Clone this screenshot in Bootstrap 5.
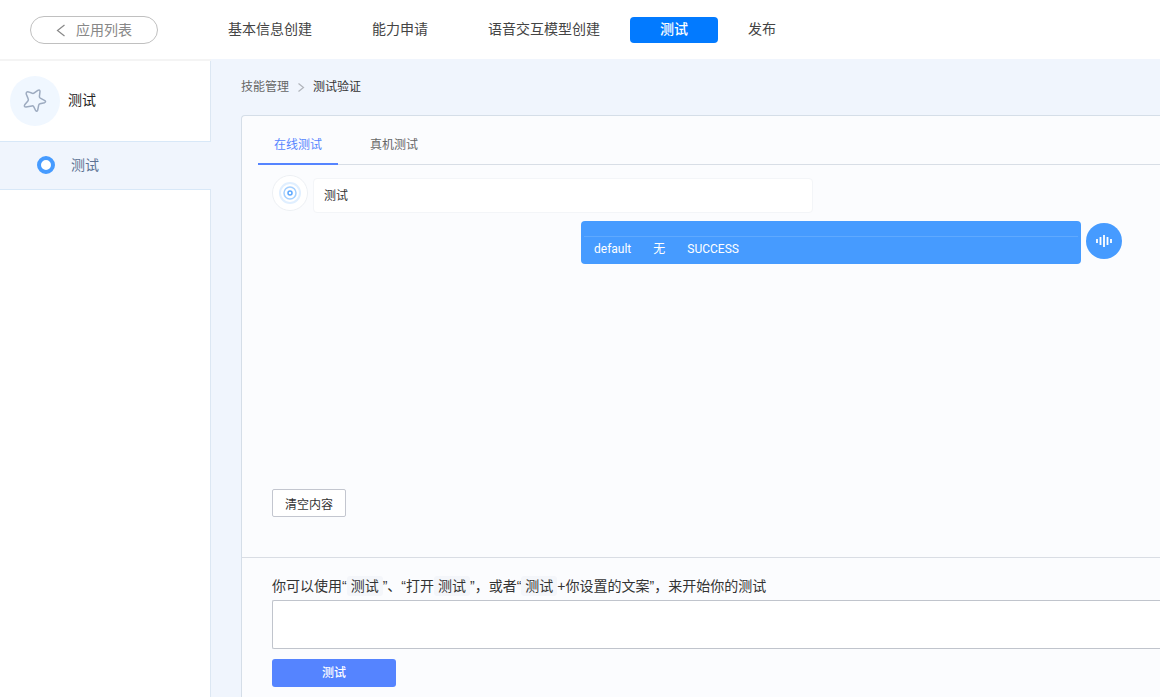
<!DOCTYPE html>
<html lang="zh-CN">
<head>
<meta charset="utf-8">
<meta name="viewport" content="width=device-width, initial-scale=1">
<title>测试验证</title>
<link href="https://cdn.jsdelivr.net/npm/bootstrap@5.3.0/dist/css/bootstrap.min.css" rel="stylesheet">
<style>
  body { font-family: "Liberation Sans", "Noto Sans CJK SC", sans-serif; font-size: 14px; line-height: 20px; color: #333; background: #f0f5fd; }
  a { text-decoration: none; }
  .fs-12 { font-size: 12px; }
  .topbar { height: 59px; padding-left: 30px; background: #fff; }
  .back-btn { width: 128px; height: 28px; border: 1px solid #c0c0c0; border-radius: 14px; color: #888; margin-right: 40px; padding-top: 1px; }
  .back-btn svg { margin-right: 10px; }
  .step-link { padding: 2px 30px 4px; color: #444; border-radius: 4px; }
  .step-link.active { background: #027aff; color: #fff; font-weight: 500; }
  .sidebar { width: 211px; background: #fff; border-top: 2px solid #f4f4f4; }
  .app-head { height: 80px; padding: 0 10px; border-right: 1px solid #dce7f3; color: #222; }
  .app-name { padding-bottom: 2px; }
  .app-icon { width: 50px; height: 50px; background: #f0f7ff; margin-right: 8px; }
  .side-link { height: 49px; padding: 0 0 1px 37px; background: #f0f5fd; border-top: 1px solid #d8e8f8; border-bottom: 1px solid #d8e8f8; color: #5b7293; }
  .ring { width: 18px; height: 18px; border: 4px solid #469bff; background: #fff; margin-right: 16px; }
  .side-rest { border-right: 1px solid #dce7f3; }
  .content-area { padding: 18px 0 0 30px; }
  .crumbs a { color: #666; }
  .panel { margin-top: 18px; background: #fbfcfe; border: 1px solid #d5dee8; border-width: 1px 0 0 1px; border-radius: 4px 0 0 0; }
  .test-tabs { margin-left: 16px; height: 49px; border-bottom: 1px solid #d8dee6; padding-top: 9px; }
  .tab-btn { background: none; border: 0; border-bottom: 2px solid transparent; height: 40px; padding: 2px 16px 0; margin-right: 16px; color: #666; }
  .tab-btn.active { color: #5584ff; border-color: #5584ff; }
  .chat { min-height: 392px; padding: 10px 38px 40px 30px; }
  .avatar { width: 36px; height: 36px; }
  .said { width: 500px; height: 35px; padding: 0 10px; margin: 3px 0 0 5px; background: #fff; border: 1px solid #f3f5f8; border-radius: 4px; }
  .reply { width: 500px; height: 43px; padding: 15px 3px 0; margin-right: 5px; background: #469bff; border-radius: 4px; color: #fff; font-family: Roboto, "Noto Sans CJK SC", sans-serif; }
  .reply-avatar { margin-top: 2px; }
  .reply-row { border-top: 1px solid #5fa9ff; padding: 2px 10px 0; gap: 22px; }
  .clear-btn { width: 74px; height: 28px; padding: 3px 0 0; background: #fff; border: 1px solid #c3c6cf; border-radius: 2px; color: #333; }
  .composer { padding: 18px 0 10px 30px; border-top: 1px solid #d9dde4; }
  .chip { display: inline-block; padding: 0 4px; background: #f4f6fa; border-radius: 3px; }
  .query { height: 49px; margin-top: 4px; background: #fff; border: 1px solid #c0c4cc; border-right: 0; border-radius: 2px 0 0 2px; resize: none; padding: 6px 12px; }
  .send-btn { width: 124px; height: 28px; margin-top: 10px; background: #5584ff; border: 0; border-radius: 3px; color: #fff; font-weight: 500; }
</style>
</head>
<body class="d-flex flex-column min-vh-100">
<header class="topbar d-flex align-items-center flex-shrink-0">
  <a href="#" class="back-btn d-flex align-items-center justify-content-center flex-shrink-0">
    <svg width="10" height="14" viewBox="0 0 10 14" fill="none" stroke="#888" stroke-width="1.2"><path d="M8.5 2 1.5 7.5 8.5 13"/></svg>应用列表
  </a>
  <nav class="d-flex text-nowrap">
    <a class="step-link" href="#">基本信息创建</a>
    <a class="step-link" href="#">能力申请</a>
    <a class="step-link" href="#">语音交互模型创建</a>
    <a class="step-link active" href="#" aria-current="page">测试</a>
    <a class="step-link" href="#">发布</a>
  </nav>
</header>
<div class="d-flex flex-grow-1">
  <aside class="sidebar d-flex flex-column flex-shrink-0">
    <div class="app-head d-flex align-items-center">
      <span class="app-icon rounded-circle d-flex align-items-center justify-content-center">
        <svg width="26" height="26" viewBox="0 0 26 26" fill="none" stroke="#9dabc0" stroke-width="1.5" stroke-linejoin="round"><path d="M6.500 3.900L10.300 5.300Q11.400 5.600 12.300 4.900L15.800 2.400Q18 1.300 18 3.500L17.400 8.300Q17.300 9.600 18.300 10.200L22.900 12.600Q24.400 13.800 22.600 14.700L18 15.800Q16.900 16.100 16.700 17.200L15.700 22.200Q15 24.100 13.600 22.500L11.700 18.700Q11.100 17.700 9.900 17.900L4 18.900Q1.600 18.700 2.700 16.800L5.900 12.900Q6.700 11.900 6.200 10.900L4.200 6Q3.900 3.500 6.500 3.900Z"/></svg>
      </span>
      <span class="app-name">测试</span>
    </div>
    <a href="#" class="side-link d-flex align-items-center"><span class="ring rounded-circle"></span>测试</a>
    <div class="side-rest flex-grow-1"></div>
  </aside>
  <main class="content-area d-flex flex-column flex-grow-1">
    <nav class="crumbs fs-12 d-flex align-items-center" aria-label="breadcrumb">
      <a href="#">技能管理</a>
      <svg class="mx-2" width="8" height="10" viewBox="0 0 8 10" fill="none" stroke="#b0b4bb" stroke-width="1.2"><path d="M1.500 1.500 6.500 5.500 1.500 9.500"/></svg>
      <span>测试验证</span>
    </nav>
    <section class="panel flex-grow-1">
      <div class="test-tabs d-flex fs-12" role="tablist">
        <button type="button" role="tab" aria-selected="true" class="tab-btn active">在线测试</button>
        <button type="button" role="tab" aria-selected="false" class="tab-btn">真机测试</button>
      </div>
      <div class="chat d-flex flex-column fs-12">
        <div class="d-flex align-items-start">
          <svg class="avatar flex-shrink-0" viewBox="0 0 36 36" fill="none"><circle cx="18" cy="18" r="17.500" fill="#fff" stroke="#edf0f4"/><circle cx="18" cy="18" r="10" stroke="#e0efff" stroke-width="2"/><circle cx="18" cy="18" r="6" stroke="#a5d0ff" stroke-width="1.500"/><circle cx="18" cy="18" r="2" stroke="#5ca8ff" stroke-width="1.500"/></svg>
          <div class="said d-flex align-items-center">测试</div>
        </div>
        <div class="d-flex align-items-start justify-content-end mt-2">
          <div class="reply"><div class="reply-row d-flex"><span>default</span><span>无</span><span>SUCCESS</span></div></div>
          <svg class="avatar reply-avatar flex-shrink-0" viewBox="0 0 36 36"><circle cx="18" cy="18" r="18" fill="#469bff"/><path d="M11 16v4M14.500 14v8M18 12v12M21.500 14v8M25 16v4" stroke="#fff" stroke-width="1.800"/></svg>
        </div>
        <button type="button" class="clear-btn mt-auto">清空内容</button>
      </div>
      <form class="composer">
        <label class="d-block" for="query">你可以使用“<span class="chip">测试</span>”、“打开<span class="chip">测试</span>”，或者“<span class="chip">测试</span>+你设置的文案”，来开始你的测试</label>
        <textarea id="query" class="query d-block w-100"></textarea>
        <button type="button" class="send-btn fs-12">测试</button>
      </form>
    </section>
  </main>
</div>
<script src="https://cdn.jsdelivr.net/npm/bootstrap@5.3.0/dist/js/bootstrap.bundle.min.js"></script>
</body>
</html>
